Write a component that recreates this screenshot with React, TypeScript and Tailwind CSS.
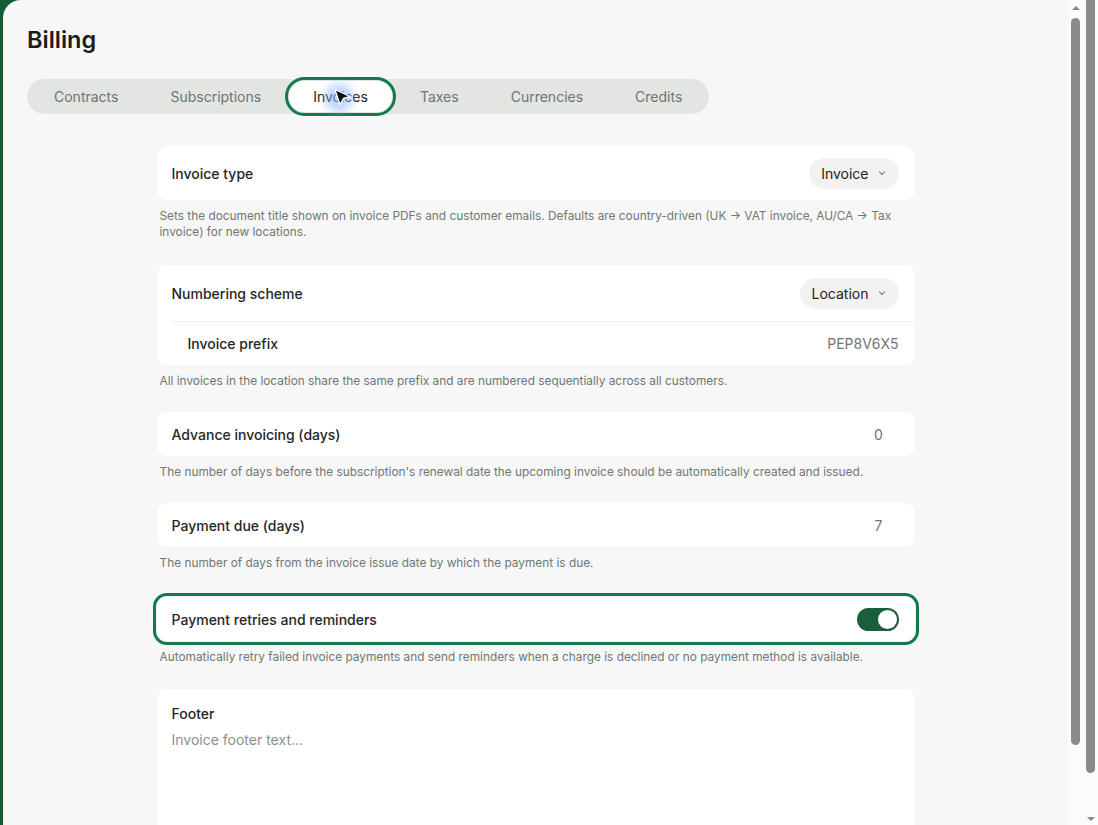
import React from 'react';

const tabs = ['Contracts', 'Subscriptions', 'Invoices', 'Taxes', 'Currencies', 'Credits'];

const Chevron = () => (
  <svg width="10" height="10" viewBox="0 0 10 10" className="text-[#8b938f]">
    <path d="M2.5 4l2.5 2.5L7.5 4" fill="none" stroke="currentColor" strokeWidth="1.2" strokeLinecap="round" strokeLinejoin="round" />
  </svg>
);

const Help = ({ children, className = 'mb-6' }: { children: React.ReactNode; className?: string }) => (
  <p className={`mt-2 px-[3px] text-[11.85px] leading-4 text-[#6e7874] ${className}`}>{children}</p>
);

const SelectPill = ({ label }: { label: string }) => (
  <div className="flex h-[31px] items-center gap-2 rounded-full bg-[#f1f2f1] px-3 text-[14px] text-[#222]">
    {label}
    <Chevron />
  </div>
);

const Cursor = () => (
  <div className="pointer-events-none absolute left-[44px] top-[7px]">
    <div className="absolute -left-2 -top-1 h-7 w-7 rounded-full bg-[#8fb8ff]/60 blur-[5px]" />
    <svg width="20" height="20" viewBox="0 0 20 20" className="relative">
      <path d="M2 1.5l15 7-6.5 1.8-3.6 6.4z" fill="#111" stroke="#fff" strokeWidth="1.3" strokeLinejoin="round" />
    </svg>
  </div>
);

const Scrollbars = () => (
  <div className="flex h-full">
    <div className="relative h-full w-[15px] bg-[#fbfbfb]">
      <div className="mx-auto mt-[6px] h-0 w-0 border-x-[4px] border-b-[4px] border-x-transparent border-b-[#8a8a8a]" />
      <div className="mx-auto mt-[8px] h-[727px] w-[9px] rounded-full bg-[#8a8a8a]" />
    </div>
    <div className="relative flex h-full w-[15px] flex-col bg-[#fbfbfb]">
      <div className="mx-auto h-[773px] w-[9px] rounded-b-full bg-[#8a8a8a]" />
      <div className="mx-auto mt-auto mb-[4px] h-0 w-0 border-x-[4px] border-t-[4px] border-x-transparent border-t-[#8a8a8a]" />
    </div>
  </div>
);

export default function App() {
  return (
    <div className="flex h-[825px] w-[1098px] overflow-hidden bg-[#145c37] font-['Inter','Liberation_Sans',sans-serif]">
      <div className="ml-[3px] flex h-full flex-1 overflow-hidden rounded-tl-[18px] bg-[#f7f7f7]">
        <main className="flex-1 px-6 pt-[25px]">
          <h1 className="text-[23.5px] font-semibold leading-[30px] text-[#1c1c1c]">Billing</h1>

          <div className="mt-[24px] inline-flex h-[35px] items-center gap-1 rounded-full bg-[#e3e5e3] px-[3px]">
            {tabs.map((t) =>
              t === 'Invoices' ? (
                <div
                  key={t}
                  className="relative flex h-[31px] items-center rounded-full bg-white px-6 text-[14px] text-[#222] outline-3 outline-solid outline-offset-1 outline-[#11794a]"
                >
                  {t}
                  <Cursor />
                </div>
              ) : (
                <div key={t} className="flex h-[31px] items-center px-6 text-[14px] text-[#6b7572]">
                  {t}
                </div>
              )
            )}
          </div>

          <div className="mx-auto mt-[32px] w-[758px]">
            <div className="flex h-[54px] items-center justify-between rounded-[10px] bg-white pl-[15px] pr-4">
              <span className="text-[14px] font-medium text-[#262626]">Invoice type</span>
              <SelectPill label="Invoice" />
            </div>
            <Help className="mb-[25px]">
              Sets the document title shown on invoice PDFs and customer emails. Defaults are country-driven (UK → VAT
              invoice, AU/CA → Tax invoice) for new locations.
            </Help>

            <div className="rounded-[10px] bg-white">
              <div className="flex h-[56px] items-center justify-between pl-[15px] pr-4">
                <span className="text-[14px] font-medium text-[#262626]">Numbering scheme</span>
                <SelectPill label="Location" />
              </div>
              <div className="ml-[15px] border-t border-[#efefef]" />
              <div className="flex h-[43px] items-center justify-between pl-[31px] pr-4">
                <span className="text-[14px] font-medium text-[#262626]">Invoice prefix</span>
                <span className="text-[14px] text-[#6e7874]">PEP8V6X5</span>
              </div>
            </div>
            <Help className="mb-[23px]">
              All invoices in the location share the same prefix and are numbered sequentially across all customers.
            </Help>

            <div className="flex h-[44px] items-center justify-between rounded-[10px] bg-white pl-[15px] pr-4">
              <span className="text-[14px] font-medium text-[#262626]">Advance invoicing (days)</span>
              <span className="w-10 text-center text-[14px] text-[#6e7874]">0</span>
            </div>
            <Help className="mb-[23px]">
              The number of days before the subscription's renewal date the upcoming invoice should be automatically created
              and issued.
            </Help>

            <div className="flex h-[44px] items-center justify-between rounded-[10px] bg-white pl-[15px] pr-4">
              <span className="text-[14px] font-medium text-[#262626]">Payment due (days)</span>
              <span className="w-10 text-center text-[14px] text-[#6e7874]">7</span>
            </div>
            <Help className="mb-[26px]">The number of days from the invoice issue date by which the payment is due.</Help>

            <div className="flex h-[44px] items-center justify-between rounded-[10px] bg-white pl-[15px] pr-4 outline-3 outline-solid outline-offset-1 outline-[#11794a]">
              <span className="text-[14px] font-medium text-[#262626]">Payment retries and reminders</span>
              <div className="flex h-[23px] w-[42px] items-center justify-end rounded-full bg-[#1b5e3b] px-[2px]">
                <div className="h-[19px] w-[19px] rounded-full bg-white" />
              </div>
            </div>
            <Help>
              Automatically retry failed invoice payments and send reminders when a charge is declined or no payment method is
              available.
            </Help>

            <div className="h-[200px] rounded-[10px] bg-white px-[15px] pt-[15px]">
              <div className="text-[14px] font-medium leading-[20px] text-[#262626]">Footer</div>
              <div className="mt-[6px] text-[14px] leading-[20px] text-[#8a918f]">Invoice footer text...</div>
            </div>
          </div>
        </main>
        <Scrollbars />
      </div>
    </div>
  );
}
